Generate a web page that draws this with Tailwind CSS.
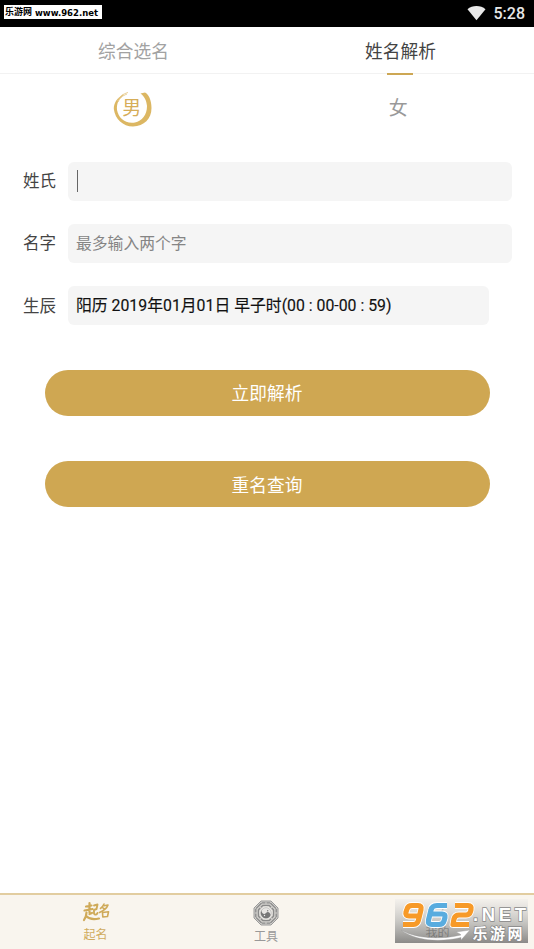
<!DOCTYPE html>
<html lang="zh-CN">
<head>
  <meta charset="UTF-8" />
  <title>姓名解析</title>
  <meta name="viewport" content="width=device-width, initial-scale=1.0" />
  <script src="https://cdn.jsdelivr.net/npm/@tailwindcss/browser@4"></script>
</head>

<body class="bg-white h-[949px] overflow-hidden flex flex-col font-[Roboto,'Noto_Sans_CJK_SC',sans-serif] text-[#444]">
  <!-- Status Bar -->
  <header class="h-[26.500px] shrink-0 bg-black flex items-center justify-between pl-1 pr-[9px]">
    <div class="h-[14px] w-[98px] -mt-[3px] bg-white text-black whitespace-nowrap flex items-center pl-px font-bold leading-none">
      <span class="text-[9px] w-[30px] font-['Noto_Sans_CJK_SC',sans-serif]">乐游网</span>
      <svg class="w-[66px] h-[14px]" viewBox="0 0 66 14"><text x="0" y="10.500" textLength="63" lengthAdjust="spacingAndGlyphs" font-family="DejaVu Sans" font-weight="bold" font-size="9">www.962.net</text></svg>
    </div>
    <div class="flex items-center gap-[8px] text-[#e8e8e8]">
      <svg class="w-[19px] h-4" viewBox="0 0 20 16" fill="currentColor"><path d="M10 15.500 .5 4C5.500-.5 14.500-.5 19.500 4Z" /></svg>
      <span class="text-[16px] font-medium leading-none pt-px">5:28</span>
    </div>
  </header>

  <!-- Tabs -->
  <nav class="h-[47.500px] shrink-0 grid grid-cols-2 text-center text-[17.700px] leading-[50px] border-b border-[#f2f2f2]">
    <a class="text-[#a2a2a2]">综合选名</a>
    <a class="relative text-[#444]">姓名解析<i class="absolute left-[120px] top-[46px] w-[26px] h-[2px] bg-[#cda754]"></i></a>
  </nav>

  <!-- Gender -->
  <div class="h-[68px] shrink-0 grid grid-cols-2 justify-items-center items-center text-[19px] pr-[3px]">
    <div class="relative size-10 flex items-center justify-center text-[#d6ad58]">
      <svg class="absolute inset-0 text-[#dcb763]" viewBox="0 0 40 40" fill="currentColor">
        <path d="M10 6.500C4 10 .8 15 .8 21C2 31 10 38.500 20 38.500C31 38 38.500 31 38.500 20C38.500 12 35.500 6 32 4.500L27.500 5.500C32 9 33.500 13 34 18C34 27 29 33 22 34.500C12 36 5.500 30 4 22C3.500 15 6 10 11 7Z" />
        <path d="M4 13C7 8 10 6 15 4.500M5 14C7 10 9 8 14 6" fill="none" stroke="#e6c98b" stroke-width=".9" />
      </svg>
      <span class="relative leading-none -left-px">男</span>
    </div>
    <span class="text-[#999] leading-none">女</span>
  </div>

  <!-- Form -->
  <main class="shrink-0 pt-[19.500px] text-[16.500px]">
    <div class="pl-[23px] pr-[22.500px] space-y-[23px]">
      <label class="flex items-center h-[39.300px]">
        <span class="w-[44.500px] shrink-0 pt-[2px]">姓氏</span>
        <span class="flex-1 h-full rounded-md bg-[#f5f5f5] flex items-center pl-[9px]"><i class="w-px h-[22px] bg-[#666]"></i></span>
      </label>
      <label class="flex items-center h-[39.300px]">
        <span class="w-[44.500px] shrink-0 pt-[2px]">名字</span>
        <span class="flex-1 h-full rounded-md bg-[#f5f5f5] flex items-center pl-[8.500px] pt-px text-[15.800px] text-[#858585]">最多输入两个字</span>
      </label>
      <label class="flex items-center h-[39.300px]">
        <span class="w-[44.500px] shrink-0 pt-[3px]">生辰</span>
        <span class="w-[421.500px] h-full rounded-md bg-[#f5f5f5] flex items-center pl-[8.500px] pt-px text-[15.830px] text-[#111] [-webkit-text-stroke:0.15px_#111] whitespace-nowrap">阳历 2019年01月01日 早子时(00 : 00-00 : 59)</span>
      </label>
    </div>

    <div class="mt-[44.500px] px-[44.500px] space-y-[45px] text-[17.700px] text-white">
      <button class="block w-full h-[46px] pt-[3px] rounded-full bg-[#cfa752]">立即解析</button>
      <button class="block w-full h-[46px] pt-[4px] rounded-full bg-[#cfa752]">重名查询</button>
    </div>
  </main>

  <!-- Bottom Navigation -->
  <footer class="relative mt-auto h-[56px] shrink-0 border-t-2 border-[#e2cda0] bg-[#f9f5ee] flex text-[12px] text-center">
    <a class="w-[191px] flex flex-col items-center text-[#d0ab5d] pt-[6px]">
      <svg class="w-7 h-[22px]" viewBox="0 0 28 22" fill="none" stroke="#cfaa59" stroke-linecap="round" stroke-linejoin="round">
        <path stroke-width="2.200" d="M4 5.500 9.500 4.500M7.500 2V11.500M2.500 9.500 10.500 8M4.500 11.500C4.500 15 3 17.500 2 19M7.500 13 10 12M4 15C7 18 11 19 17 17.500" />
        <path stroke-width="1.900" d="M12 4.500 15.500 3.500 14.500 8 12 9V12.500C13 14.500 15 13.500 15.500 12" />
        <path stroke-width="1.600" d="M22 3C21 5 20 6.500 18.500 7.500M22 4.800 26 4C24.800 7.500 22 9.500 17.500 11.500M21 7 22.500 8M20.500 11.500 20.800 16 25.500 15.500 26.500 10.800Z" />
      </svg>
      <span class="mt-[4px] leading-[16px]">起名</span>
    </a>
    <a class="w-[150px] flex flex-col items-center text-[#999] pt-[5px]">
      <svg class="w-[26px] h-[26px]" viewBox="-13 -13 26 26">
        <path d="M-5-12H5L12-5V5L5 12H-5L-12 5V-5Z" fill="#d2d0cc" stroke="#9a9a9a" />
        <g id="trigrams" stroke="#8a8a8a" stroke-width="1.300"></g>
        <circle r="6.400" fill="#f1efeb" />
        <circle r="5.300" fill="#e8e6e3" stroke="#aaa" stroke-width=".6" />
        <path d="M-3.700-3.700A5.200 5.200 0 0 0 3.700 3.700A2.600 2.600 0 0 0 0 0A2.600 2.600 0 0 1-3.700-3.700Z" fill="#777" />
        <circle cx="1.700" cy="-2.200" r=".7" fill="#777" /><circle cx="-1.500" cy="2.500" r=".7" fill="#eee" />
      </svg>
      <span class="mt-[3px] leading-[16px]">工具</span>
    </a>
    <a class="w-[193px] flex flex-col items-center pt-[5px]">
      <svg class="w-6 h-[24px]" viewBox="0 0 24 24" fill="none" stroke="#999" stroke-width="1.500"><circle cx="12" cy="8" r="5" /><path d="M4 22C4 12 20 12 20 22Z" /></svg>
      <span class="mt-[1px] leading-[16px] text-[#444]">我的</span>
    </a>

    <!-- Site badge over the last tab -->
    <svg class="absolute left-[395px] top-[4px] w-[133px] h-[44px]" viewBox="0 0 133 44">
      <defs>
        <linearGradient id="shade" x2="0" y2="1">
          <stop stop-color="#f0eeeb" stop-opacity=".6" />
          <stop offset=".5" stop-color="#b5b5b3" stop-opacity=".7" />
          <stop offset="1" stop-color="#6f6f6e" stop-opacity=".8" />
        </linearGradient>
      </defs>
      <rect width="133" height="44" fill="url(#shade)" />
      <path d="M6 31C20 39.500 45 41 66 36L65 35 61 33 75 31 66 41 66 38.500C45 43.500 20 42 6 31Z" fill="#fff" stroke="#999" stroke-width=".4" />
      <!-- 962 numerals, drawn as thick slanted strokes -->
      <g fill="none" stroke-linejoin="round">
        <g stroke="#fff" stroke-width="6.800">
          <path d="M24 17H14Q10 17 11 13L12 10Q13 6.500 17 6.500H23Q27 6.500 26 10.500L23.500 21Q22.500 25.500 18.500 25.500H8" />
          <path d="M52 6.500H42Q37 6.500 36 11L33.500 21Q32.500 25.500 37 25.500H44Q48 25.500 49 22L50 18.500Q51 15 47 15H36" />
          <path d="M60 6.500H73Q77 6.500 76 10.500L75.500 12.500Q74.500 16 71 16H64Q60 16 59 20L58 25.500H74" />
        </g>
        <g stroke-width="5.200">
          <path stroke="#f79a28" d="M24 17H14Q10 17 11 13L12 10Q13 6.500 17 6.500H23Q27 6.500 26 10.500L23.500 21Q22.500 25.500 18.500 25.500H8" />
          <path stroke="#58acdf" d="M52 6.500H42Q37 6.500 36 11L33.500 21Q32.500 25.500 37 25.500H44Q48 25.500 49 22L50 18.500Q51 15 47 15H36" />
          <path stroke="#f79a28" d="M60 6.500H73Q77 6.500 76 10.500L75.500 12.500Q74.500 16 71 16H64Q60 16 59 20L58 25.500H74" />
        </g>
      </g>
      <g fill="#fff" stroke="#888" stroke-width="1.400" paint-order="stroke" font-weight="bold">
        <text x="78" y="21.500" font-family="Liberation Sans" font-size="18.500" textLength="53" lengthAdjust="spacing">.NET</text>
        <text x="77.500" y="39.500" font-family="Noto Sans CJK SC" font-size="15" textLength="50">乐游网</text>
      </g>
    </svg>
  </footer>

  <script>
    // two rows of bars on each of the eight sides
    const trigrams = document.getElementById('trigrams');
    for (let i = 0; i < 8; i++) {
      const side = document.createElementNS('http://www.w3.org/2000/svg', 'path');
      side.setAttribute('d', i % 2 ? 'M-4-10.200H4M-3.300-7.600H-.5M.5-7.600H3.300' : 'M-4-10.200H-.5M.5-10.200H4M-3.300-7.600H3.300');
      side.setAttribute('transform', `rotate(${i * 45})`);
      trigrams.appendChild(side);
    }
  </script>
</body>
</html>
